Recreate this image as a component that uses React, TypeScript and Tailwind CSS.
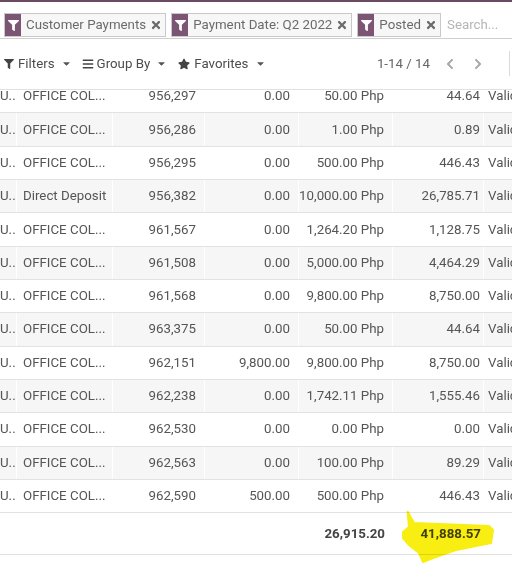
import React from "react";
import { FaFilter, FaBars, FaStar, FaCaretDown, FaTimes, FaChevronLeft, FaChevronRight } from "react-icons/fa";

const rows = [
  { name: "OFFICE COL...", num: "956,297", paid: "0.00", amt: "50.00 Php", signed: "44.64" },
  { name: "OFFICE COL...", num: "956,286", paid: "0.00", amt: "1.00 Php", signed: "0.89" },
  { name: "OFFICE COL...", num: "956,295", paid: "0.00", amt: "500.00 Php", signed: "446.43" },
  { name: "Direct Deposit", num: "956,382", paid: "0.00", amt: "10,000.00 Php", signed: "26,785.71" },
  { name: "OFFICE COL...", num: "961,567", paid: "0.00", amt: "1,264.20 Php", signed: "1,128.75" },
  { name: "OFFICE COL...", num: "961,508", paid: "0.00", amt: "5,000.00 Php", signed: "4,464.29" },
  { name: "OFFICE COL...", num: "961,568", paid: "0.00", amt: "9,800.00 Php", signed: "8,750.00" },
  { name: "OFFICE COL...", num: "963,375", paid: "0.00", amt: "50.00 Php", signed: "44.64" },
  { name: "OFFICE COL...", num: "962,151", paid: "9,800.00", amt: "9,800.00 Php", signed: "8,750.00" },
  { name: "OFFICE COL...", num: "962,238", paid: "0.00", amt: "1,742.11 Php", signed: "1,555.46" },
  { name: "OFFICE COL...", num: "962,530", paid: "0.00", amt: "0.00 Php", signed: "0.00" },
  { name: "OFFICE COL...", num: "962,563", paid: "0.00", amt: "100.00 Php", signed: "89.29" },
  { name: "OFFICE COL...", num: "962,590", paid: "500.00", amt: "500.00 Php", signed: "446.43" },
];

function Facet({ label }: { label: string }) {
  return (
    <div className="flex shrink-0 items-stretch h-[24px] border border-[#c9c9c9] bg-[#f7f7f7] whitespace-nowrap">
      <div className="w-[16px] bg-[#7c5474] flex items-center justify-center">
        <FaFilter className="text-white text-[11px]" />
      </div>
      <span className="pl-[5px] pr-[4px] flex items-center text-[#6b6b6b]">{label}</span>
      <span className="pr-[3px] flex items-center text-[#6b6b6b]">
        <FaTimes className="text-[12px]" />
      </span>
    </div>
  );
}

export default function App() {
  return (
    <div className="relative w-[512px] h-[565px] bg-white overflow-hidden font-['Roboto',sans-serif] text-[13.3px] text-[#555]">
      <div className="h-[2px] bg-[#6b4a63]" />

      {/* Control panel */}
      <div className="relative z-10 h-[88px] bg-white border-b border-[#dee2e6]">
        <div className="pt-[11px] flex items-center gap-[5px] pl-[4px] border-b border-[#cfcfcf] pb-[1px] overflow-hidden">
          <Facet label="Customer Payments" />
          <Facet label="Payment Date: Q2 2022" />
          <Facet label="Posted" />
          <span className="pl-[1px] shrink-0 text-[#b5b5b5] whitespace-nowrap">Search...</span>
        </div>

        <div className="mt-[12px] h-[25px] flex items-center pl-[4px] whitespace-nowrap">
          <div className="flex items-center gap-[4px]">
            <FaFilter className="text-[10px] text-[#444]" />
            <span className="text-[#4c4c4c]">Filters</span>
            <FaCaretDown className="text-[11px] text-[#555] ml-[2px]" />
          </div>
          <div className="flex items-center gap-[3px] ml-[10px]">
            <FaBars className="text-[12px] text-[#444]" />
            <span className="text-[#4c4c4c]">Group By</span>
            <FaCaretDown className="text-[11px] text-[#555] ml-[3px]" />
          </div>
          <div className="flex items-center gap-[4px] ml-[11px]">
            <FaStar className="text-[12px] text-[#444]" />
            <span className="text-[#4c4c4c]">Favorites</span>
            <FaCaretDown className="text-[11px] text-[#555] ml-[3px]" />
          </div>
          <div className="ml-auto flex items-center h-full">
            <span className="text-[#666]">1-14 / 14</span>
            <FaChevronLeft className="text-[12px] text-[#a5a5a5] ml-[14px]" />
            <FaChevronRight className="text-[12px] text-[#a5a5a5] ml-[16px]" />
            <div className="ml-[25px] h-full border-l border-[#dadada]" />
            <div className="w-[2px]" />
          </div>
        </div>
      </div>

      {/* Table */}
      <div className="-mt-[11px]">
        {rows.map((r, i) => (
          <div
            key={i}
            className={`flex h-[33.33px] border-t border-[#e2e2e2] items-center whitespace-nowrap ${i % 2 === 1 ? "bg-[#f6f6f6]" : "bg-white"}`}
          >
            <div className="w-[17px] h-full flex items-center overflow-hidden border-r border-white">U...</div>
            <div className="w-[96px] h-full flex items-center pl-[6px] overflow-hidden border-r border-white">{r.name}</div>
            <div className="w-[92px] h-full flex items-center justify-end pr-[8px] border-r border-white">{r.num}</div>
            <div className="w-[94px] h-full flex items-center justify-end pr-[8px] border-r border-white">{r.paid}</div>
            <div className="w-[94px] h-full flex items-center justify-end pr-[8px] border-r border-white">{r.amt}</div>
            <div className="w-[91px] h-full flex items-center justify-end pr-[3px] border-r border-white">{r.signed}</div>
            <div className="flex-1 h-full flex items-center pl-[4px] overflow-hidden">Valid</div>
          </div>
        ))}
        <div className="flex h-[43px] border-t border-b border-[#e2e2e2] items-center whitespace-nowrap font-bold text-[#444]">
          <div className="w-[299px]" />
          <div className="w-[94px] text-right pr-[8px]">26,915.20</div>
          <div className="w-[91px] text-right pr-[3px]">41,888.57</div>
        </div>
      </div>

      {/* Highlighter mark */}
      <svg className="absolute top-0 left-0 pointer-events-none mix-blend-multiply" width="512" height="565">
        <path
          d="M407.7 511.7 L414 523 L489 526 L493 530 L491 543 L456 550 L433 558 L423 562 L419 553 L409 545 L403 538 L403 532 L409 527 L408 517 Z"
          fill="#f8ee12"
          stroke="#f8ee12"
          strokeWidth="2"
          strokeLinejoin="round"
        />
      </svg>
    </div>
  );
}
